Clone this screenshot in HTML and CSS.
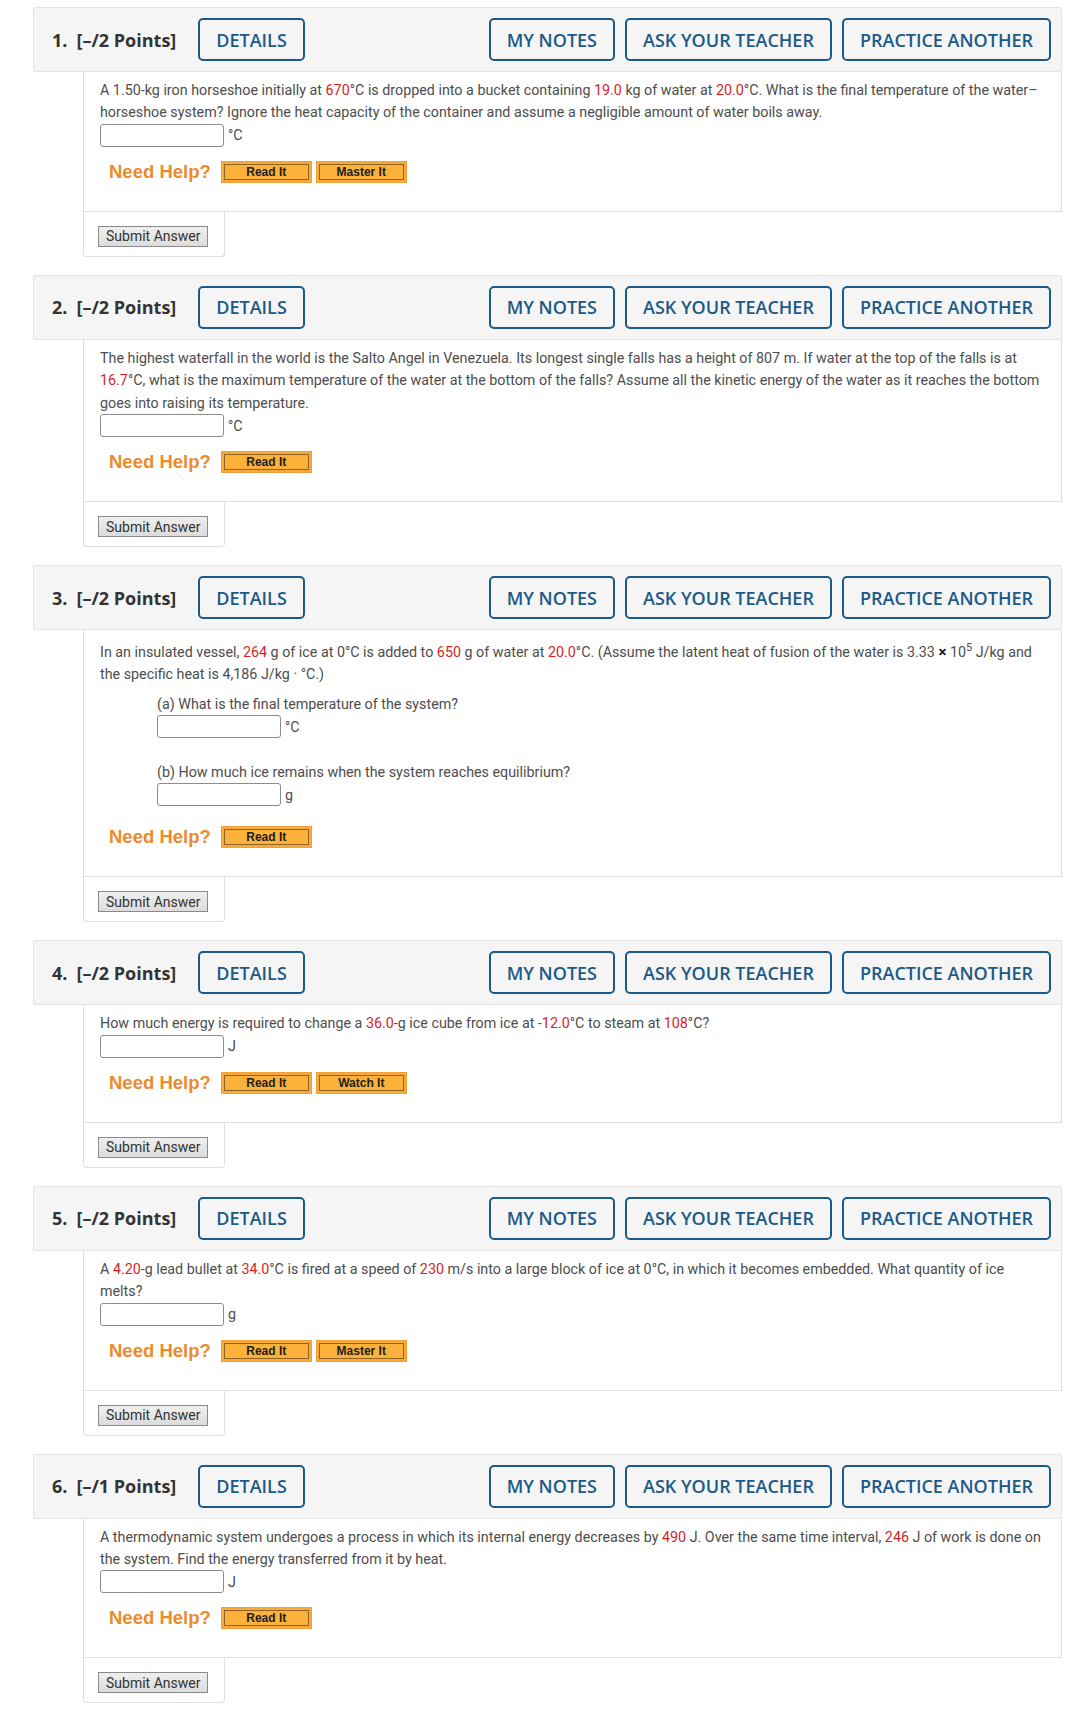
FILE: index.html
```html
<!DOCTYPE html>
<html lang="en">
<head>
  <meta charset="UTF-8" />
  <meta name="viewport" content="width=device-width, initial-scale=1.0"/>
  <title>Assignment</title>
  <link rel="stylesheet" href="styles.css">
</head>
<body>
  <div class="page">

    <!-- Question 1 -->
    <section class="question">
      <div class="q-head">
        <span class="q-num">1.</span>
        <span class="q-points">[–/2 Points]</span>
        <button class="q-btn">DETAILS</button>
        <div class="q-actions">
          <button class="q-btn">MY NOTES</button>
          <button class="q-btn">ASK YOUR TEACHER</button>
          <button class="q-btn">PRACTICE ANOTHER</button>
        </div>
      </div>
      <div class="q-body">
        <p class="q-text">A 1.50-kg iron horseshoe initially at <span class="val">670</span>°C is dropped into a bucket containing <span class="val">19.0</span> kg of water at <span class="val">20.0</span>°C. What is the final temperature of the water–horseshoe system? Ignore the heat capacity of the container and assume a negligible amount of water boils away.</p>
        <div class="answer"><input class="field" type="text"><span class="unit">°C</span></div>
        <div class="help">
          <span class="help-label">Need Help?</span>
          <button class="help-btn">Read It</button>
          <button class="help-btn">Master It</button>
        </div>
      </div>
      <div class="submit-tab"><button class="submit-btn">Submit Answer</button></div>
    </section>

    <!-- Question 2 -->
    <section class="question">
      <div class="q-head">
        <span class="q-num">2.</span>
        <span class="q-points">[–/2 Points]</span>
        <button class="q-btn">DETAILS</button>
        <div class="q-actions">
          <button class="q-btn">MY NOTES</button>
          <button class="q-btn">ASK YOUR TEACHER</button>
          <button class="q-btn">PRACTICE ANOTHER</button>
        </div>
      </div>
      <div class="q-body">
        <p class="q-text">The highest waterfall in the world is the Salto Angel in Venezuela. Its longest single falls has a height of 807 m. If water at the top of the falls is at <span class="val">16.7</span>°C, what is the maximum temperature of the water at the bottom of the falls? Assume all the kinetic energy of the water as it reaches the bottom goes into raising its temperature.</p>
        <div class="answer"><input class="field" type="text"><span class="unit">°C</span></div>
        <div class="help">
          <span class="help-label">Need Help?</span>
          <button class="help-btn">Read It</button>
        </div>
      </div>
      <div class="submit-tab"><button class="submit-btn">Submit Answer</button></div>
    </section>

    <!-- Question 3 -->
    <section class="question">
      <div class="q-head">
        <span class="q-num">3.</span>
        <span class="q-points">[–/2 Points]</span>
        <button class="q-btn">DETAILS</button>
        <div class="q-actions">
          <button class="q-btn">MY NOTES</button>
          <button class="q-btn">ASK YOUR TEACHER</button>
          <button class="q-btn">PRACTICE ANOTHER</button>
        </div>
      </div>
      <div class="q-body">
        <p class="q-text">In an insulated vessel, <span class="val">264</span> g of ice at 0°C is added to <span class="val">650</span> g of water at <span class="val">20.0</span>°C. (Assume the latent heat of fusion of the water is 3.33 <b class="times">×</b> 10<sup>5</sup> J/kg and the specific heat is 4,186 J/kg · °C.)</p>
        <div class="parts">
          <div class="part">
            <p class="q-text">(a) What is the final temperature of the system?</p>
            <div class="answer"><input class="field" type="text"><span class="unit">°C</span></div>
          </div>
          <div class="part">
            <p class="q-text">(b) How much ice remains when the system reaches equilibrium?</p>
            <div class="answer"><input class="field" type="text"><span class="unit">g</span></div>
          </div>
        </div>
        <div class="help">
          <span class="help-label">Need Help?</span>
          <button class="help-btn">Read It</button>
        </div>
      </div>
      <div class="submit-tab"><button class="submit-btn">Submit Answer</button></div>
    </section>

    <!-- Question 4 -->
    <section class="question">
      <div class="q-head">
        <span class="q-num">4.</span>
        <span class="q-points">[–/2 Points]</span>
        <button class="q-btn">DETAILS</button>
        <div class="q-actions">
          <button class="q-btn">MY NOTES</button>
          <button class="q-btn">ASK YOUR TEACHER</button>
          <button class="q-btn">PRACTICE ANOTHER</button>
        </div>
      </div>
      <div class="q-body">
        <p class="q-text">How much energy is required to change a <span class="val">36.0</span>-g ice cube from ice at <span class="val">-12.0</span>°C to steam at <span class="val">108</span>°C?</p>
        <div class="answer"><input class="field" type="text"><span class="unit">J</span></div>
        <div class="help">
          <span class="help-label">Need Help?</span>
          <button class="help-btn">Read It</button>
          <button class="help-btn">Watch It</button>
        </div>
      </div>
      <div class="submit-tab"><button class="submit-btn">Submit Answer</button></div>
    </section>

    <!-- Question 5 -->
    <section class="question">
      <div class="q-head">
        <span class="q-num">5.</span>
        <span class="q-points">[–/2 Points]</span>
        <button class="q-btn">DETAILS</button>
        <div class="q-actions">
          <button class="q-btn">MY NOTES</button>
          <button class="q-btn">ASK YOUR TEACHER</button>
          <button class="q-btn">PRACTICE ANOTHER</button>
        </div>
      </div>
      <div class="q-body">
        <p class="q-text">A <span class="val">4.20</span>-g lead bullet at <span class="val">34.0</span>°C is fired at a speed of <span class="val">230</span> m/s into a large block of ice at 0°C, in which it becomes embedded. What quantity of ice melts?</p>
        <div class="answer"><input class="field" type="text"><span class="unit">g</span></div>
        <div class="help">
          <span class="help-label">Need Help?</span>
          <button class="help-btn">Read It</button>
          <button class="help-btn">Master It</button>
        </div>
      </div>
      <div class="submit-tab"><button class="submit-btn">Submit Answer</button></div>
    </section>

    <!-- Question 6 -->
    <section class="question">
      <div class="q-head">
        <span class="q-num">6.</span>
        <span class="q-points">[–/1 Points]</span>
        <button class="q-btn">DETAILS</button>
        <div class="q-actions">
          <button class="q-btn">MY NOTES</button>
          <button class="q-btn">ASK YOUR TEACHER</button>
          <button class="q-btn">PRACTICE ANOTHER</button>
        </div>
      </div>
      <div class="q-body">
        <p class="q-text">A thermodynamic system undergoes a process in which its internal energy decreases by <span class="val">490</span> J. Over the same time interval, <span class="val">246</span> J of work is done on the system. Find the energy transferred from it by heat.</p>
        <div class="answer"><input class="field" type="text"><span class="unit">J</span></div>
        <div class="help">
          <span class="help-label">Need Help?</span>
          <button class="help-btn">Read It</button>
        </div>
      </div>
      <div class="submit-tab"><button class="submit-btn">Submit Answer</button></div>
    </section>

  </div>
</body>
</html>
```

FILE: styles.css
```css
body {
  margin: 0;
  padding: 0;
  background: #fff;
  font-family: Roboto, "Liberation Sans", Arial, sans-serif;
  font-size: 14.3px;
  color: #4d4d4d;
}

.page {
  padding: 7px 18px 0 33px;
}

.question {
  margin-bottom: 18px;
}

/* Header bar with points and action buttons */
.q-head {
  display: flex;
  align-items: center;
  height: 65px;
  box-sizing: border-box;
  padding: 0 10px 0 18px;
  background: #f5f5f5;
  border: 1px solid #e4e4e4;
  border-radius: 2px;
}

.q-num,
.q-points {
  font-family: "Open Sans", "Liberation Sans", sans-serif;
  font-weight: 700;
  font-size: 18px;
  color: #333;
}

.q-num {
  margin-right: 9px;
}

.q-points {
  margin-right: 22px;
}

.q-actions {
  margin-left: auto;
  display: flex;
  gap: 10px;
}

.q-btn {
  height: 43px;
  box-sizing: border-box;
  padding: 0 16px;
  background: transparent;
  border: 2px solid #1b5a88;
  border-radius: 5px;
  color: #1b5a88;
  font-family: "Open Sans", "Liberation Sans", sans-serif;
  font-weight: 600;
  font-size: 18px;
}

/* Question body */
.q-body {
  margin-left: 50px;
  padding: 7px 16px 28px 16px;
  border: 1px solid #dedede;
  border-top: none;
}

.q-text {
  margin: 0;
  line-height: 22.4px;
}

.val {
  color: #d61f1f;
}

.times {
  color: #222;
  font-size: 15px;
}

sup {
  font-size: 11px;
}

.answer {
  display: flex;
  align-items: center;
  height: 23px;
}

.field {
  width: 124px;
  height: 23px;
  box-sizing: border-box;
  margin: 0;
  padding: 0 4px;
  border: 1px solid #8c8c8c;
  border-radius: 3px;
  background: #fff;
}

.unit {
  margin-left: 4px;
}

.parts {
  margin-bottom: 20px;
}

.part {
  margin: 7px 0 0 57px;
}

.part + .part {
  margin-top: 23px;
}

/* Need help row */
.help {
  display: flex;
  align-items: center;
  margin-top: 14px;
  padding-left: 9px;
}

.help-label {
  margin-right: 10px;
  font-family: "Liberation Sans", Arial, sans-serif;
  font-weight: bold;
  font-size: 18.5px;
  color: #ec8b2c;
}

.help-btn {
  width: 91px;
  height: 22px;
  margin-right: 4px;
  padding: 0;
  background: #fbb13a;
  border: 1px solid #f0a03c;
  box-shadow: inset 0 0 0 2px #f9a935, inset 0 0 0 3px #8f6424;
  font-family: "Liberation Sans", Arial, sans-serif;
  font-weight: bold;
  font-size: 12px;
  color: #1e1e1e;
}

/* Submit tab under the body */
.submit-tab {
  margin-left: 50px;
  width: 142px;
  box-sizing: border-box;
  padding: 14px 0 9px 14px;
  border: 1px solid #dedede;
  border-top: none;
  border-radius: 0 0 4px 4px;
}

.submit-btn {
  display: block;
  height: 21px;
  padding: 0 7px;
  background: linear-gradient(#efefef, #dcdcdc);
  border: 1px solid #8a8a8a;
  border-radius: 0;
  font-family: Roboto, "Liberation Sans", sans-serif;
  font-size: 14px;
  color: #333;
}
```
